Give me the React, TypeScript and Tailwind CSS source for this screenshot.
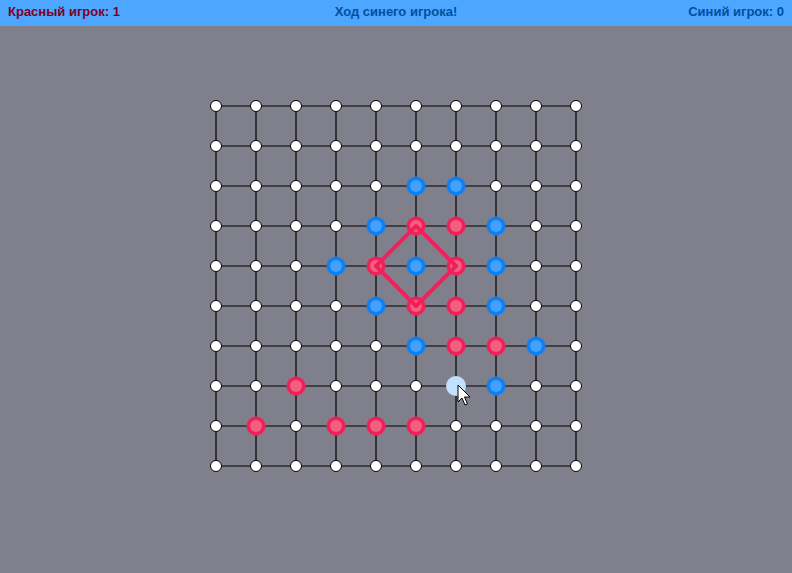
import React from 'react';

const N = 10;
const STEP = 40;
const OFF = 10;

type Stone = { c: number; r: number; color: 'red' | 'blue' };

const stones: Stone[] = [
  { c: 5, r: 2, color: 'blue' },
  { c: 6, r: 2, color: 'blue' },
  { c: 4, r: 3, color: 'blue' },
  { c: 5, r: 3, color: 'red' },
  { c: 6, r: 3, color: 'red' },
  { c: 7, r: 3, color: 'blue' },
  { c: 3, r: 4, color: 'blue' },
  { c: 4, r: 4, color: 'red' },
  { c: 5, r: 4, color: 'blue' },
  { c: 6, r: 4, color: 'red' },
  { c: 7, r: 4, color: 'blue' },
  { c: 4, r: 5, color: 'blue' },
  { c: 5, r: 5, color: 'red' },
  { c: 6, r: 5, color: 'red' },
  { c: 7, r: 5, color: 'blue' },
  { c: 5, r: 6, color: 'blue' },
  { c: 6, r: 6, color: 'red' },
  { c: 7, r: 6, color: 'red' },
  { c: 8, r: 6, color: 'blue' },
  { c: 2, r: 7, color: 'red' },
  { c: 7, r: 7, color: 'blue' },
  { c: 1, r: 8, color: 'red' },
  { c: 3, r: 8, color: 'red' },
  { c: 4, r: 8, color: 'red' },
  { c: 5, r: 8, color: 'red' },
];

const pos = (i: number) => OFF + i * STEP;

const Board = () => {
  const taken = new Set(stones.map((s) => `${s.c}-${s.r}`));
  const lines = [];
  for (let i = 0; i < N; i++) {
    lines.push(<line key={`h${i}`} x1={pos(0)} y1={pos(i)} x2={pos(N - 1)} y2={pos(i)} stroke="#000" strokeWidth={1.2} />);
    lines.push(<line key={`v${i}`} x1={pos(i)} y1={pos(0)} x2={pos(i)} y2={pos(N - 1)} stroke="#000" strokeWidth={1.2} />);
  }
  const dots = [];
  for (let r = 0; r < N; r++) {
    for (let c = 0; c < N; c++) {
      if (taken.has(`${c}-${r}`) || (c === 6 && r === 7)) continue;
      dots.push(<circle key={`d${c}-${r}`} cx={pos(c)} cy={pos(r)} r={5.5} fill="#fff" stroke="#000" strokeWidth={1} />);
    }
  }
  return (
    <svg width={380} height={380} viewBox="0 0 380 380" className="block">
      {lines}
      {dots}
      {stones.map((s) => (
        <g key={`s${s.c}-${s.r}`}>
          <circle cx={pos(s.c)} cy={pos(s.r)} r={9.5} fill={s.color === 'red' ? '#f0205a' : '#1080f0'} />
          <circle cx={pos(s.c)} cy={pos(s.r)} r={6} fill={s.color === 'red' ? '#f2607f' : '#42a0ff'} />
        </g>
      ))}
      <polygon
        points={`${pos(5)},${pos(3)} ${pos(6)},${pos(4)} ${pos(5)},${pos(5)} ${pos(4)},${pos(4)}`}
        fill="none"
        stroke="#f0205a"
        strokeWidth={4}
        strokeLinejoin="round"
      />
      <circle cx={pos(6)} cy={pos(7)} r={10} fill="#c2e0ff" />
      <path
        d="M252 289 L252 306 L256 302 L259 309 L261.5 308 L258.5 301 L264 301 Z"
        fill="#fff"
        stroke="#000"
        strokeWidth={1}
        strokeLinejoin="round"
      />
    </svg>
  );
};

export default function App() {
  return (
    <div className="w-[792px] h-[573px] bg-[#80808c] flex flex-col" style={{ fontFamily: '"Liberation Sans", Arial, sans-serif' }}>
      <div className="h-[26px] bg-[#4da6ff] grid grid-cols-3 items-center px-2 pb-[3px] text-[13px] font-bold">
        <span className="text-[#800020]">Красный игрок: 1</span>
        <span className="text-[#0050a0] text-center">Ход синего игрока!</span>
        <span className="text-[#0050a0] text-right">Синий игрок: 0</span>
      </div>
      <div className="flex justify-center pt-[70px]">
        <Board />
      </div>
    </div>
  );
}
